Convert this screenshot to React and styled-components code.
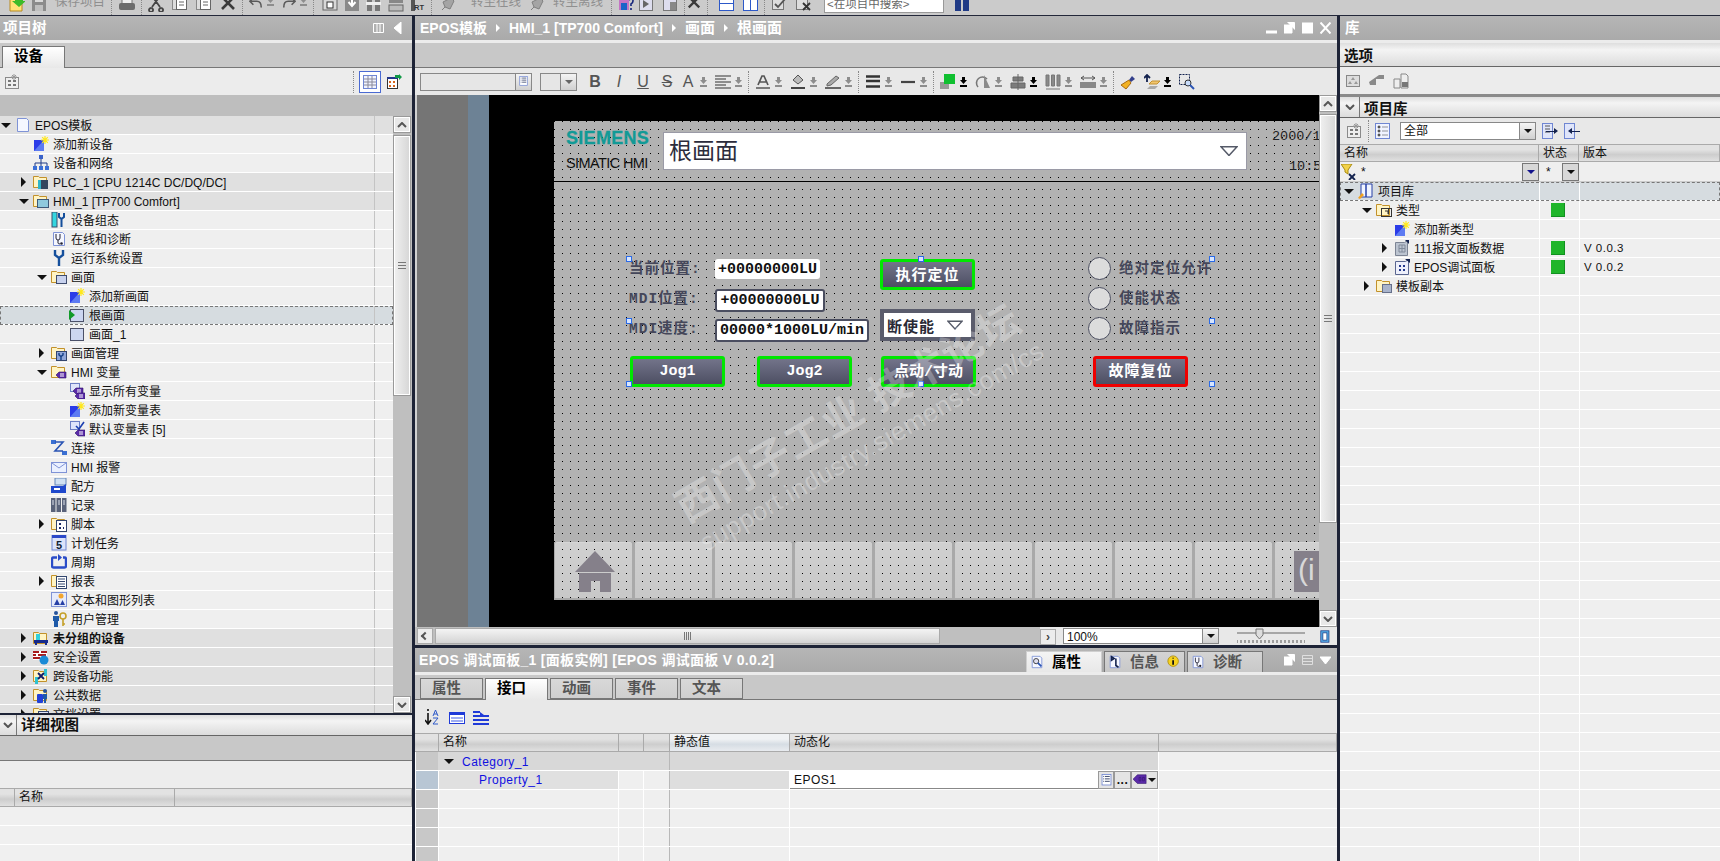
import React from 'react'
import styled, { createGlobalStyle, css } from 'styled-components'

const UI_FONT = `"Liberation Sans", "Noto Sans CJK SC", sans-serif`
const HMI_FONT = `"Liberation Mono", "Noto Sans CJK SC", monospace`

const GlobalStyle = createGlobalStyle`
	html, body { margin: 0; padding: 0; background: #c8c8c8; }
	body { width: 1720px; height: 861px; overflow: hidden; font-family: ${UI_FONT}; font-size: 12px; color: #111; }
	#root { width: 1720px; height: 861px; }
	* { box-sizing: border-box; }
`

/* ---------- icons, all on a 16 x 16 grid ---------- */

const Folder = ({ children }) => (
	<>
		<path d="M.5 2.500h5l1 1h7v10H.5z" fill="#fff4c4" stroke="#c2912b" />
		{children}
	</>
)
const Doc = ({ children }) => (
	<>
		<path d="M2.500 1.500h9l2 2v11h-11z" fill="#f5f7ff" stroke="#7f93d6" />
		{children}
	</>
)
const Tag = ({ x = 6, y = 9 }) => (
	<g transform={`translate(${x} ${y})`}>
		<path d="M0 3l3-3h7v6H3z" fill="#5a2aa8" stroke="#2e1266" strokeWidth=".6" />
		<path d="M4 2h4M4 4h4" stroke="#fff" />
	</g>
)
const Drum = () => (
	<>
		<rect x="1" y="4" width="10" height="11" fill="#2b3ce8" />
		<path d="M1 15L11 4v11z" fill="#5d7bf2" />
	</>
)

const icons = {
	page: <Doc />,
	add: (
		<>
			<Drum />
			<path d="M12 0v8M8 4h8M9.200 1.200l5.600 5.600M14.800 1.200l-5.600 5.600" stroke="#ffe81a" strokeWidth="1.200" />
		</>
	),
	network: (
		<>
			<rect x="6" y="0" width="4" height="4" fill="#3a62c9" />
			<path d="M8 4v4M2 12V8h12v4M8 8v4" stroke="#1f3a86" fill="none" />
			<rect x="0" y="11" width="4" height="4" fill="#3b6fd6" />
			<rect x="6" y="11" width="4" height="4" fill="#3b6fd6" />
			<rect x="12" y="11" width="4" height="4" fill="#3b6fd6" />
		</>
	),
	plc: (
		<Folder>
			<rect x="5" y="6" width="3" height="9" fill="#2fb5c9" />
			<rect x="8" y="6" width="7" height="9" fill="#34465e" />
		</Folder>
	),
	hmi: (
		<Folder>
			<rect x="4.500" y="6.500" width="11" height="8" fill="#8fc9dd" stroke="#3e5878" />
		</Folder>
	),
	config: (
		<>
			<rect x="1" y="0" width="5" height="15" fill="#34d6e0" stroke="#38506e" />
			<path d="M8 1v4l2.500 2L13 5V1M10.500 7v8" stroke="#154f9c" strokeWidth="2" fill="none" />
		</>
	),
	steth: (
		<Doc>
			<path d="M5 3v4q0 2 2 2t2-2V3M7 9v3q0 1 2 1" stroke="#223" fill="none" />
			<circle cx="10.500" cy="12.500" r="1.300" fill="#223" />
		</Doc>
	),
	wrench: <path d="M4 0v5l4 3 4-3V0M8 8v8" stroke="#154f9c" strokeWidth="2.400" fill="none" />,
	screens: (
		<Folder>
			<rect x="5.500" y="6.500" width="10" height="8" fill="#c8d2ee" stroke="#3e4c6e" />
		</Folder>
	),
	screen: <rect x="1.500" y="2.500" width="13" height="12" fill="#ccd6f0" stroke="#4a5068" />,
	screenOn: (
		<>
			<rect x="1.500" y="2.500" width="13" height="12" fill="#ccd6f0" stroke="#4a5068" />
			<path d="M0 3l6 5-6 5z" fill="#119a2a" />
		</>
	),
	manage: (
		<Folder>
			<rect x="5.500" y="6.500" width="10" height="9" fill="#8fa6d8" stroke="#33466e" />
			<path d="M8 8v2l2 1.500 2-1.500V8M10 11v4" stroke="#123f86" strokeWidth="1.400" fill="none" />
		</Folder>
	),
	tagFolder: (
		<Folder>
			<Tag x={5} y={8} />
		</Folder>
	),
	allTags: (
		<>
			<rect x="1.500" y=".5" width="9" height="8" fill="#dfe5fa" stroke="#6d7fc4" />
			<Tag x={4} y={5} />
			<Tag x={6} y={10} />
		</>
	),
	tagTable: (
		<>
			<rect x="1.500" y=".5" width="9" height="8" fill="#dfe5fa" stroke="#6d7fc4" />
			<path d="M7 5l3 3 5-7" stroke="#1c3fb0" strokeWidth="1.600" fill="none" />
			<Tag x={6} y={9} />
		</>
	),
	link: (
		<>
			<rect x="0" y="0" width="5" height="4" fill="#3a6fd2" />
			<rect x="11" y="11" width="5" height="4" fill="#3a6fd2" />
			<path d="M4 2h8L4 11h8" stroke="#2a54b4" strokeWidth="1.600" fill="none" />
		</>
	),
	mail: (
		<>
			<rect x=".5" y="3.500" width="15" height="10" fill="#eaf0ff" stroke="#7f93d6" />
			<path d="M1 4l7 5 7-5" stroke="#7f93d6" fill="none" />
		</>
	),
	recipe: (
		<>
			<rect x="4" y="0" width="11" height="7" fill="#cfe0f2" stroke="#6486b8" />
			<path d="M0 8h12l3-2v9H0z" fill="#1f48cc" />
			<rect x="3" y="10" width="6" height="2" fill="#fff" />
		</>
	),
	log: (
		<>
			<rect x="0" y="1" width="4.500" height="14" fill="#59627a" />
			<rect x="5.500" y="1" width="4.500" height="14" fill="#59627a" />
			<rect x="11" y="1" width="4.500" height="14" fill="#59627a" />
			<path d="M2 3v5M8 3v5M13 3v5" stroke="#dfe3ee" />
		</>
	),
	script: (
		<Folder>
			<rect x="5.500" y="4.500" width="10" height="11" fill="#fff" stroke="#33466e" />
			<path d="M8 7h2v2H8zM12 7h1M8 11h2v2H8zM12 11h1v2h-1z" fill="#1b2a66" />
		</Folder>
	),
	task: (
		<>
			<rect x="1" y="0" width="14" height="15" fill="#dbe3fa" stroke="#6f86d2" />
			<rect x="1" y="0" width="14" height="3" fill="#2b48c8" />
			<text x="8" y="13.500" textAnchor="middle" fontSize="11" fontWeight="700" fontFamily="Liberation Sans" fill="#123">5</text>
		</>
	),
	cycle: (
		<>
			<path d="M6 3.500H2.500a1.500 1.500 0 0 0-1.500 1.500v7a1.500 1.500 0 0 0 1.500 1.500h11a1.500 1.500 0 0 0 1.500-1.500V5a1.500 1.500 0 0 0-1.500-1.500H12" stroke="#2a4cc8" strokeWidth="2.400" fill="none" />
			<path d="M7 0l4 3.500-4 3.500z" fill="#2a4cc8" />
		</>
	),
	report: (
		<Folder>
			<rect x="5.500" y="3.500" width="10" height="12" fill="#fff" stroke="#33466e" />
			<path d="M7 6h7M7 8.500h7M7 11h7M7 13.500h7" stroke="#33466e" />
		</Folder>
	),
	texts: (
		<>
			<rect x=".5" y=".5" width="15" height="14" fill="#e6ebfb" stroke="#7f93d6" />
			<circle cx="10" cy="4" r="2.500" fill="#f2a530" />
			<path d="M3 13l3-6 3 6zM9 13l2.500-5 2.500 5z" fill="#2740a6" />
		</>
	),
	users: (
		<>
			<circle cx="5" cy="2" r="2" fill="#26539c" />
			<path d="M2 5h6v5H7v6H3v-6H2z" fill="#1f5aa8" />
			<circle cx="12" cy="5" r="3" fill="none" stroke="#c5a02a" strokeWidth="1.600" />
			<path d="M12 8v7M12 13h2" stroke="#c5a02a" strokeWidth="1.600" />
		</>
	),
	ungrouped: (
		<Folder>
			<rect x="3" y="4" width="4" height="6" fill="#32d0dc" />
			<rect x="1" y="10" width="14" height="3" fill="#152a8c" />
			<path d="M3 13v2M13 13v2" stroke="#152a8c" strokeWidth="2" />
		</Folder>
	),
	security: (
		<>
			<rect x="0" y="2" width="14" height="9" fill="#fff" />
			<path d="M0 3h6M8 3h6M0 6h3M5 6h8M0 9h7" stroke="#a81c1c" strokeWidth="1.800" />
			<circle cx="11" cy="11" r="4.500" fill="#1a8ad6" />
		</>
	),
	cross: (
		<Folder>
			<rect x="2" y="9" width="3" height="7" fill="#2fc2d0" />
			<rect x="11" y="1" width="3" height="7" fill="#2fc2d0" />
			<path d="M5 5l6 6M11 5l-6 6" stroke="#101a66" strokeWidth="1.800" />
		</Folder>
	),
	shared: (
		<Folder>
			<rect x="4" y="7" width="6" height="9" rx="1" fill="#2240d8" />
			<circle cx="12" cy="4" r="2" fill="#26539c" />
			<path d="M10 7h4v5h-1v4h-2v-4h-1z" fill="#1f5aa8" />
		</Folder>
	),
	docs: (
		<Folder>
			<rect x="5.500" y="5.500" width="10" height="9" fill="#dfe5fa" stroke="#33466e" />
		</Folder>
	),
	book: (
		<>
			<path d="M3 1h5v13H3zM8 1h6v13H8z" fill="#f0f4ff" stroke="#2740a6" />
			<path d="M0 15l4-5 2 2-4 4z" fill="#f0a020" />
		</>
	),
	types: (
		<Folder>
			<path d="M6.500 6.500h6v6M9 9h3v3" stroke="#333" fill="none" />
			<rect x="5.500" y="6.500" width="10" height="8" fill="none" stroke="#333" />
		</Folder>
	),
	block: (
		<>
			<path d="M1.500 2.500h9l3-2v15h-12z" fill="#bcc4d0" stroke="#7c8494" />
			<path d="M5 5h6v7H5zM8 5v7M5 8.500h6" stroke="#808a9a" fill="none" />
			<path d="M11 0h4v4z" fill="#13224e" />
		</>
	),
	faceplate: (
		<>
			<path d="M1.500 2.500h10l3-2v15h-13z" fill="#eef0fb" stroke="#5a6690" />
			<path d="M5 6h2v2H5zM9 6h2v2H9zM5 10h2v2H5zM9 10h2v2H9z" fill="#24388c" />
			<path d="M11 0h5v4z" fill="#13224e" />
		</>
	),
	copies: (
		<Folder>
			<rect x="6.500" y="6.500" width="9" height="8" fill="#a9b4cc" stroke="#66708a" />
		</Folder>
	),
	/* toolbars */
	newProject: (
		<>
			<path d="M1 3h12v12H1z" fill="#ffe278" stroke="#b88a20" />
			<path d="M6 0h8v5h3l-7 6-7-6h3z" fill="#3dbb2a" />
		</>
	),
	save: (
		<>
			<rect x="1" y="1" width="14" height="14" fill="#767676" />
			<rect x="4" y="1" width="8" height="5" fill="#ddd" />
			<rect x="4" y="9" width="8" height="6" fill="#bbb" />
		</>
	),
	print: (
		<>
			<rect x="3" y="0" width="10" height="8" fill="#eee" stroke="#777" />
			<rect x="0" y="7" width="16" height="7" rx="2" fill="#6c6c6c" />
		</>
	),
	cut: <path d="M4 0l8 11M12 0L4 11M3 12a2 2 0 1 0 .1 0M13 12a2 2 0 1 0 .1 0" stroke="#444" strokeWidth="1.800" fill="none" />,
	sheet: (
		<>
			<rect x="1.500" y="2.500" width="9" height="11" fill="#ddd" stroke="#888" />
			<rect x="5.500" y=".5" width="10" height="13" fill="#fff" stroke="#666" />
			<path d="M8 3h5M8 6h5M8 9h5" stroke="#666" />
		</>
	),
	del: <path d="M2 1l12 12M14 1L2 13" stroke="#3a3a3a" strokeWidth="2.600" />,
	undo: <path d="M5 2L1 6l4 4M1 6h8q5 0 5 7" stroke="#5a5a5a" strokeWidth="1.800" fill="none" />,
	redo: <path d="M11 2l4 4-4 4M15 6H7q-5 0-5 7" stroke="#5a5a5a" strokeWidth="1.800" fill="none" />,
	machine: (
		<>
			<rect x="1" y="2" width="14" height="12" fill="#d8d8d8" stroke="#666" />
			<rect x="5" y="6" width="6" height="6" fill="#fff" stroke="#333" />
		</>
	),
	download: (
		<>
			<rect x="1" y="1" width="14" height="14" fill="#8a8a8a" />
			<path d="M8 2v7M4.500 6L8 10l3.500-4" stroke="#fff" strokeWidth="2" fill="none" />
		</>
	),
	upload: (
		<>
			<rect x="1" y="1" width="5" height="14" fill="#777" />
			<rect x="9" y="1" width="5" height="14" fill="#777" />
			<rect x="0" y="6" width="15" height="3" fill="#eee" />
		</>
	),
	device: (
		<>
			<rect x="1" y="1" width="14" height="6" fill="#888" />
			<rect x="1" y="9" width="14" height="6" fill="#bbb" stroke="#666" />
		</>
	),
	rt: (
		<>
			<rect x="1" y="0" width="4" height="15" fill="#555" />
			<text x="4" y="14" fontSize="7.500" fontWeight="700" fontFamily="Liberation Sans" fill="#333">RT</text>
		</>
	),
	plug: <path d="M2 14l3-3 5 2 4-8-3-3-8 4 2 5z" fill="#a4a4a4" stroke="#808080" />,
	access: (
		<>
			<rect x="1" y="4" width="10" height="10" fill="#c030c0" opacity=".55" />
			<rect x="3" y="7" width="6" height="7" fill="#1a64c8" />
			<path d="M11 4q4-3 4 1 0 2-2 3v2M13 12v2" stroke="#14247a" strokeWidth="1.600" fill="none" />
		</>
	),
	win: (
		<>
			<rect x="1.500" y="1.500" width="13" height="13" fill="#dde" stroke="#777" />
			<path d="M5 4v8l6-4z" fill="#666" />
		</>
	),
	winSplit: (
		<>
			<rect x="1.500" y="1.500" width="13" height="13" fill="#dde" stroke="#777" />
			<rect x="8" y="6" width="6" height="8" fill="#888" />
		</>
	),
	winRows: (
		<>
			<rect x="1.500" y="1.500" width="14" height="13" fill="#fff" stroke="#2c58c8" />
			<path d="M2 7.500h13" stroke="#2c58c8" />
		</>
	),
	winCols: (
		<>
			<rect x="1.500" y="1.500" width="14" height="13" fill="#fff" stroke="#2c58c8" />
			<path d="M8.500 2v12" stroke="#2c58c8" />
		</>
	),
	check: (
		<>
			<rect x="1.500" y="2.500" width="11" height="11" fill="#ddd" stroke="#777" />
			<path d="M4 8l3 3 7-8" stroke="#555" strokeWidth="1.800" fill="none" />
		</>
	),
	checkX: (
		<>
			<rect x="1.500" y="2.500" width="11" height="11" fill="#ddd" stroke="#777" />
			<path d="M8 7l7 7M15 7l-7 7" stroke="#333" strokeWidth="1.800" />
		</>
	),
	binoculars: (
		<>
			<path d="M2 4h3v-3h3v14H2zM10 1h3v3h3v11h-6z" fill="#1f3a86" />
			<path d="M0 1h6M0 3h6" stroke="#a8c0f0" />
		</>
	),
	filterGrid: (
		<>
			<rect x="1.500" y="3.500" width="13" height="11" fill="#eee" stroke="#8a8a8a" />
			<path d="M4 6h3v2H4zM9 6h3v2H9zM4 10h3v2H4zM9 10h3v2H9z" fill="#777" />
			<path d="M10 0v6M7 3h6M8 1l4 4M12 1L8 5" stroke="#999" />
		</>
	),
	gridView: (
		<>
			<rect x="1.500" y="1.500" width="13" height="13" fill="#f0f3ff" stroke="#6f86d2" />
			<path d="M2 5h12M2 8h12M2 11h12M6 2v12M10 2v12" stroke="#8a8a9a" />
		</>
	),
	gridGo: (
		<>
			<rect x="1.500" y="3.500" width="10" height="11" fill="#fff" stroke="#333" />
			<path d="M3 7h2v2H3zM7 7h2v2H7zM3 11h2v2H3zM7 11h2v2H7z" fill="#d8661c" />
			<rect x="1" y="3" width="11" height="2" fill="#24388c" />
			<path d="M9 1h4V0l3 3-3 3V4H9z" fill="#129a48" />
		</>
	),
	sortAZ: (
		<>
			<path d="M3 0v2M3 4v10M0 11l3 4 3-4" stroke="#111" strokeWidth="1.600" fill="none" />
			<path d="M8 7l2.500-6L13 7M9 5h3M8 9h5l-5 6h5" stroke="#2c58c8" fill="none" />
		</>
	),
	groupBox: (
		<>
			<rect x=".5" y="3.500" width="15" height="11" fill="#fff" stroke="#1f3ad8" />
			<rect x="0" y="3" width="16" height="3" fill="#1f3ad8" />
			<path d="M2 9h12M2 12h12" stroke="#7f93f0" strokeWidth="1.500" />
		</>
	),
	levels: <path d="M0 2h7v2H0zM0 6h16v2H0zM0 10h16v2H0zM0 14h16v2H0zM7 3l4 3H7z" fill="#1f3ad8" />,
	align: <path d="M0 2h16M0 5h11M0 8h16M0 11h11M0 14h16" stroke="#6f6f6f" strokeWidth="1.600" />,
	fontColor: <path d="M3 11l4-9h2l4 9M5 8h6M1 14h14" stroke="#555" strokeWidth="1.700" fill="none" />,
	fill: (
		<>
			<path d="M3 6l5-5 5 5-5 4z" fill="#bbb" stroke="#555" />
			<path d="M1 14h14" stroke="#444" strokeWidth="2" />
		</>
	),
	pen: (
		<>
			<path d="M2 10L11 2l3 2-8 7-4 1z" fill="#aaa" stroke="#666" />
			<path d="M0 14h16" stroke="#666" strokeWidth="2" />
		</>
	),
	lineWeights: <path d="M1 2.500h14M1 7h14M1 12.500h14" stroke="#333" strokeWidth="2.400" />,
	lineStyle: <path d="M1 8h14" stroke="#444" strokeWidth="2.200" />,
	green: (
		<>
			<rect x="0" y="8" width="9" height="7" fill="#999" />
			<rect x="4" y="0" width="11" height="10" fill="#10c030" />
		</>
	),
	rotate: (
		<>
			<path d="M3 13A6 6 0 0 1 12 5" stroke="#777" strokeWidth="1.600" fill="none" />
			<path d="M9 1l6 13H9z" fill="#8a8a8a" />
		</>
	),
	alignMid: <path d="M8 0v16M3 3h10v4H3zM1 9h14v5H1z" fill="#7c7c7c" stroke="#666" />,
	distribute: <path d="M1 1h3v11H1zM6.500 1h3v11h-3zM12 1h3v11h-3zM1 15h14" fill="#8a8a8a" stroke="#777" />,
	sameSize: (
		<>
			<rect x="0" y="8" width="16" height="6" fill="#888" />
			<path d="M1 4h14M1 4l3-2M1 4l3 2M15 4l-3-2M15 4l-3 2" stroke="#555" />
		</>
	),
	brush: (
		<>
			<path d="M9 6l3-4 3 3-4 3z" fill="#34408c" />
			<path d="M1 11l8-5 2 3-5 6z" fill="#f2b224" stroke="#a86a10" />
		</>
	),
	layers: (
		<>
			<path d="M3 8V1M0 4l3-3 3 3" stroke="#13224e" strokeWidth="1.800" fill="none" />
			<path d="M5 10l3-3h8l-3 3z" fill="#f2c66e" stroke="#c29030" />
			<path d="M3 15l3-3h8l-3 3z" fill="#aaa" />
		</>
	),
	zoomBox: (
		<>
			<rect x=".5" y=".5" width="10" height="10" fill="none" stroke="#13224e" strokeDasharray="2 1" />
			<circle cx="9" cy="9" r="3" fill="#c8dcfa" stroke="#333" />
			<path d="M11 11l4 4" stroke="#2a54b4" strokeWidth="2" />
		</>
	),
	inspect: (
		<Doc>
			<circle cx="7" cy="7" r="3" fill="#dde" stroke="#333" />
			<path d="M9 9l4 4" stroke="#2a54b4" strokeWidth="2" />
		</Doc>
	),
	info: (
		<Doc>
			<path d="M4 2l3 2-3 2zM9 4v8l3 2" stroke="#13224e" strokeWidth="1.800" fill="none" />
		</Doc>
	),
	warn: (
		<>
			<circle cx="7" cy="7" r="6" fill="#f6d21e" stroke="#b09010" />
			<path d="M7 3v1M7 6v5" stroke="#111" strokeWidth="2" />
		</>
	),
	library: (
		<>
			<rect x="1.500" y="2.500" width="13" height="11" fill="#ddd" stroke="#888" />
			<path d="M8 4l2 3H6zM5 8l2 3H3zM11 8l2 3H9z" fill="#999" />
		</>
	),
	lib2: <path d="M0 9l10-7h5v4H7v6H1z" fill="#8a8a8a" />,
	lib3: (
		<>
			<path d="M1 6h6v9H1zM8 1h5l2 2v12H8z" fill="#eee" stroke="#888" />
			<rect x="9" y="9" width="6" height="5" fill="#777" />
		</>
	),
	listView: (
		<>
			<rect x=".5" y=".5" width="14" height="15" fill="#f0f3ff" stroke="#6f86d2" />
			<path d="M3 3h2v2H3zM7 4h6M3 7h2v2H3zM7 8h6M3 11h2v2H3zM7 12h6" fill="#555" stroke="#555" strokeWidth=".6" />
		</>
	),
	moveIn: (
		<>
			<rect x=".5" y=".5" width="10" height="15" fill="#dfe5fa" stroke="#6f86d2" />
			<path d="M3 3h5M3 6h5M3 9h5" stroke="#555" />
			<path d="M4 8h8V5l4 3-4 3v-2H4z" fill="#13224e" />
		</>
	),
	moveOut: (
		<>
			<rect x=".5" y=".5" width="10" height="15" fill="#dfe5fa" stroke="#6f86d2" />
			<path d="M16 8H8V5L4 8l4 3V9h8z" fill="#13224e" />
		</>
	),
	funnel: (
		<>
			<path d="M0 0h11L7 6v4L4 8V6z" fill="#f2d24a" stroke="#a88a10" />
			<path d="M8 10l6 6M14 10l-6 6" stroke="#13224e" strokeWidth="1.800" />
		</>
	),
	listBtn: (
		<>
			<rect x="2.500" y=".5" width="11" height="13" fill="#fff" stroke="#6f86d2" />
			<path d="M4 3h1M6 3h6M4 6h1M6 6h6M4 9h1M6 9h6" stroke="#13224e" />
		</>
	),
	tagBtn: <path d="M0 7l5-5h10v10H5zM7 5h2v4H7zM11 5h2v4h-2z" fill="#5a2aa8" stroke="#2e1266" strokeWidth=".6" />,
	fit: (
		<>
			<rect x="1" y="1" width="10" height="14" fill="#58b6f0" stroke="#1f3a86" />
			<rect x="3.500" y="3.500" width="5" height="9" fill="#fff" stroke="#1f3a86" />
		</>
	),
}

const Svg = styled.svg`
	display: block;
	flex: none;
	width: ${p => p.$size}px;
	height: ${p => p.$size}px;
	opacity: ${p => (p.$dim ? 0.75 : 1)};
`
const Icon = ({ name, size = 16, dim }) => (
	<Svg viewBox="0 0 16 16" $size={size} $dim={dim}>
		{icons[name]}
	</Svg>
)

/* ---------- page frame ---------- */

const Page = styled.div`
	width: 1720px;
	height: 861px;
	display: flex;
	flex-direction: column;
	overflow: hidden;
`
const TopBar = styled.div`
	height: 16px;
	flex: none;
	display: flex;
	align-items: flex-start;
	background: #cbcbcb;
	border-bottom: 1px solid #23283a;
	overflow: hidden;
	padding-left: 9px;
`
const TopTool = styled.div`
	flex: none;
	margin-top: -4px;
	margin-left: ${p => p.$ml || 0}px;
`
const TopText = styled.span`
	flex: none;
	margin-top: -7px;
	margin-left: ${p => p.$ml || 8}px;
	font-size: 12.500px;
	line-height: 18px;
	color: #8f8f8f;
`
const TopSep = styled.div`
	flex: none;
	height: 15px;
	margin-left: ${p => p.$ml || 6}px;
	margin-right: ${p => p.$mr || 6}px;
	border-left: 1px dotted #888;
`
const SearchBox = styled.div`
	flex: none;
	width: 120px;
	height: 13px;
	margin-left: 13px;
	padding-left: 2px;
	background: #fff;
	border: 1px solid #999;
	border-top: 0;
	font-size: 11.500px;
	line-height: 8px;
	color: #666;
	overflow: hidden;
	white-space: nowrap;
`
const Columns = styled.div`
	flex: 1;
	min-height: 0;
	display: flex;
`
const Pane = styled.section`
	flex: none;
	width: ${p => p.$w}px;
	height: 100%;
	display: flex;
	flex-direction: column;
	overflow: hidden;
	background: #e8e8e8;
`
const Divider = styled.div`
	flex: none;
	width: 3px;
	background: #1d2336;
`
const TitleBar = styled.div`
	flex: none;
	height: ${p => p.$h || 24}px;
	display: flex;
	align-items: center;
	gap: ${p => p.$gap || 0}px;
	padding-left: ${p => p.$pl || 3}px;
	background: linear-gradient(#b6b6b6, #aaaaaa);
	color: #fff;
	font-weight: 700;
	font-size: 14.500px;
	line-height: 20px;
	white-space: nowrap;
`
const WhiteEdge = styled.div`
	flex: none;
	height: 3px;
	background: #ececec;
`
const Crumb = styled.span`
	font-size: ${p => p.$fs || 14}px;
	letter-spacing: ${p => p.$ls || 0}px;
`
const CrumbArrow = styled.span`
	flex: none;
	width: 0;
	height: 0;
	border-left: 4px solid #fff;
	border-top: 4px solid transparent;
	border-bottom: 4px solid transparent;
`
const TitleTools = styled.div`
	margin-left: ${p => (p.$ml ? `${p.$ml}px` : 'auto')};
	display: flex;
	align-items: center;
	gap: ${p => p.$gap || 7}px;
	padding-right: ${p => p.$pr || 6}px;
`
const WinGlyph = styled.svg`
	display: block;
	width: 11px;
	height: 12px;
	fill: #fff;
	stroke: #fff;
	opacity: ${p => (p.$dim ? 0.6 : 1)};
`
const GreyStrip = styled.div`
	flex: none;
	height: ${p => p.$h || 25}px;
	background: ${p => p.$bg || '#c8c8c8'};
	border-bottom: ${p => (p.$flat ? 0 : '1px solid #777')};
`
const ToolStrip = styled.div`
	flex: none;
	height: ${p => p.$h}px;
	display: flex;
	align-items: center;
	gap: ${p => p.$gap || 8}px;
	padding-left: ${p => p.$pl || 4}px;
	background: ${p => p.$bg || '#eaeaea'};
`

/* ---------- trees and tables ---------- */

const TreeWrap = styled.div`
	flex: none;
	height: 597px;
	display: flex;
	background: #bfbfbf;
`
const TreeList = styled.div`
	flex: 1;
	min-width: 0;
	overflow: hidden;
`
const Row = styled.div`
	height: 19px;
	display: flex;
	align-items: stretch;
	border-bottom: 1px solid #fff;
	background: ${p => (p.$tone === 'group' ? '#e0e0e0' : p.$tone === 'sel' ? '#d6dce0' : '#efefef')};
	${p => p.$tone === 'sel' && css`
		outline: 1px dashed #777;
		outline-offset: -1px;
	`}
`
const NameCell = styled.div`
	flex: 1;
	min-width: 0;
	display: flex;
	align-items: center;
	padding-left: ${p => p.$level * 18}px;
	font-weight: ${p => (p.$bold ? 700 : 400)};
	font-size: 12px;
	line-height: 18px;
	white-space: nowrap;
	overflow: hidden;
`
const CaretBox = styled.span`
	flex: none;
	width: 15px;
	height: 18px;
	padding-right: 4px;
	display: flex;
	align-items: center;
	justify-content: center;
`
const Caret = styled.span`
	display: block;
	width: 0;
	height: 0;
	${p => (p.$open
		? css`
			border-top: 5px solid #111;
			border-left: 5px solid transparent;
			border-right: 5px solid transparent;
		`
		: css`
			border-left: 5px solid #111;
			border-top: 5px solid transparent;
			border-bottom: 5px solid transparent;
		`)}
`
const Label = styled.span`
	margin-left: 4px;
	padding-top: 1px;
`
const SideCell = styled.div`
	flex: none;
	width: ${p => p.$w}px;
	display: flex;
	align-items: center;
	justify-content: ${p => (p.$center ? 'center' : 'flex-start')};
	padding-left: ${p => (p.$center ? 0 : 4)}px;
	padding-right: ${p => (p.$center ? 3 : 0)}px;
	border-left: 1px solid ${p => p.$line || '#fff'};
	font-size: 11.500px;
	letter-spacing: .5px;
`
const Status = styled.span`
	display: block;
	width: 14px;
	height: 14px;
	background: #1fb52a;
	border-bottom: 1px solid #119020;
	border-right: 1px solid #119020;
`
const ScrollY = styled.div`
	flex: none;
	width: 18px;
	display: flex;
	flex-direction: column;
	background: #bfbfbf;
	margin-right: ${p => p.$mr || 0}px;
`
const ScrollBtn = styled.div`
	flex: none;
	height: ${p => p.$h || 17}px;
	display: flex;
	align-items: center;
	justify-content: center;
	background: #e8e8e8;
	border: 1px solid #999;
	box-shadow: inset 0 0 0 1px #fff;
`
const Chevron = styled.svg`
	width: 10px;
	height: 6px;
	fill: none;
	stroke: #555;
	stroke-width: 2;
`
const Thumb = styled.div`
	flex: none;
	height: ${p => p.$h}px;
	margin-top: 2px;
	display: flex;
	align-items: center;
	justify-content: center;
	background: linear-gradient(90deg, #f0f0f0, #d6d6d6);
	border: 1px solid #999;
	box-shadow: inset 0 0 0 1px #fff;
`
const Grip = styled.span`
	display: block;
	width: 8px;
	height: 7px;
	border-top: 1px solid #777;
	border-bottom: 1px solid #777;
	background: linear-gradient(transparent 2px, #777 2px, #777 3px, transparent 3px);
`
const Track = styled.div`
	flex: 1;
`
const HeadRow = styled.div`
	flex: none;
	height: ${p => p.$h || 19}px;
	display: flex;
	background: linear-gradient(#e2e2e2, #e2e2e2 30%, #cdcdcd 60%, #e0e0e0);
	border-top: 1px solid #aaa;
	border-bottom: 1px solid #aaa;
`
const HeadCell = styled.div`
	flex: ${p => (p.$w ? 'none' : 1)};
	width: ${p => p.$w || 0}px;
	padding-left: 4px;
	border-right: 1px solid #aaa;
	font-size: 12px;
	line-height: 17px;
	${p => p.$light && css`background: linear-gradient(#f0f2f4, #f0f2f4 30%, #d6dde4 60%, #e8ebef);`}
`
const SectionHead = styled.div`
	flex: none;
	height: ${p => p.$h || 21}px;
	display: flex;
	align-items: stretch;
	background: linear-gradient(#dedede, #f4f4f4 30%, #dcdcdc);
	border-bottom: 1px solid #666;
	font-weight: 700;
	font-size: 14.500px;
	line-height: 20px;
`
const SectionToggle = styled.div`
	flex: none;
	width: ${p => p.$w || 17}px;
	display: flex;
	align-items: center;
	justify-content: center;
	border-right: 1px solid #777;
`
const SectionName = styled.div`
	padding: ${p => p.$pt || 0}px 0 0 4px;
`

/* ---------- editor area ---------- */

const ComboWrap = styled.div`
	flex: none;
	width: ${p => p.$w}px;
	height: ${p => p.$h || 18}px;
	display: flex;
	background: ${p => p.$bg || '#e6e6e6'};
	border: 1px solid #888;
	font-size: 12px;
	line-height: 16px;
	padding-left: 3px;
	margin-left: ${p => p.$ml || 0}px;
`
const ComboValue = styled.div`
	flex: 1;
	min-width: 0;
`
const ComboBtn = styled.div`
	flex: none;
	width: 16px;
	display: flex;
	align-items: center;
	justify-content: center;
	background: linear-gradient(#f4f4f4, #d0d0d0);
	border-left: 1px solid #888;
`
const DownTri = styled.span`
	display: block;
	width: 0;
	height: 0;
	border-top: 4px solid ${p => p.$c || '#666'};
	border-left: 4px solid transparent;
	border-right: 4px solid transparent;
`
const ToolPair = styled.div`
	flex: none;
	display: flex;
	align-items: center;
	gap: 4px;
	margin-left: ${p => p.$ml || 0}px;
`
const DropMark = styled.svg`
	display: block;
	flex: none;
	width: 7px;
	height: 10px;
	fill: ${p => (p.$on ? '#000' : '#8d8d8d')};
`
const TextTool = styled.span`
	flex: none;
	width: 16px;
	margin-left: ${p => p.$ml || 0}px;
	text-align: center;
	font-family: "Liberation Sans", sans-serif;
	font-size: 16px;
	line-height: 18px;
	color: #555;
	font-weight: ${p => (p.$b ? 700 : 400)};
	font-style: ${p => (p.$i ? 'italic' : 'normal')};
	text-decoration: ${p => p.$deco || 'none'};
`
const DotSep = styled.div`
	flex: none;
	height: 22px;
	margin: 0 ${p => p.$m || 0}px;
	border-left: 1px dotted #888;
`
const CanvasRow = styled.div`
	flex: none;
	height: 532px;
	display: flex;
	background: #d0d0d0;
`
const GreySide = styled.div`
	flex: none;
	width: 51px;
	margin-left: 2px;
	background: #757575;
`
const BlueSide = styled.div`
	flex: none;
	width: 21px;
	background: #6d8295;
`
const BlackStage = styled.div`
	flex: 1;
	min-width: 0;
	padding: 26px 0 0 65px;
	background: #000;
	overflow: hidden;
`
const dots = (bg, x = 0, y = 0) => css`
	background-color: ${bg};
	background-image: radial-gradient(circle at .5px .5px, #000 .7px, transparent .7px);
	background-size: 8px 8px;
	background-position: ${x}px ${y}px;
`
const Screen = styled.div`
	position: relative;
	width: 765px;
	height: 479px;
	display: flex;
	flex-direction: column;
	overflow: hidden;
`
const ScreenHead = styled.div`
	flex: none;
	height: 61px;
	display: flex;
	padding-left: 12px;
	border-bottom: 1px solid #000;
	${dots('#b2b2b2')}
`
const Brand = styled.div`
	flex: none;
	width: 85px;
	padding-top: 7px;
`
const BrandName = styled.div`
	font-family: "Liberation Sans", sans-serif;
	font-size: 18px;
	font-weight: 700;
	line-height: 20px;
	letter-spacing: .3px;
	color: #129a96;
	-webkit-text-stroke: .3px #129a96;
`
const BrandSub = styled.div`
	margin-top: 7px;
	font-family: "Liberation Sans", sans-serif;
	font-size: 14.500px;
	line-height: 17px;
	letter-spacing: -.6px;
	white-space: nowrap;
	color: #111;
`
const ScreenTitle = styled.div`
	flex: none;
	width: 584px;
	height: 38px;
	margin: 11px 0 0 12px;
	display: flex;
	align-items: center;
	justify-content: space-between;
	padding: 0 8px 0 5px;
	background: #fff;
	border: 1px solid #9a9aa6;
	font-size: 23px;
	line-height: 30px;
	color: #2c2c3c;
`
const Clock = styled.div`
	flex: none;
	margin-left: 25px;
	display: flex;
	flex-direction: column;
	font-family: ${HMI_FONT};
	font-size: 13.500px;
	color: #222;
	white-space: nowrap;
`
const ClockDate = styled.div`
	margin-top: 7px;
	line-height: 18px;
`
const ClockTime = styled.div`
	margin: 12px 0 0 17px;
	line-height: 18px;
`
const TriOutline = styled.svg`
	display: block;
	width: ${p => p.$w}px;
	height: ${p => p.$h}px;
	fill: none;
	stroke: #555a68;
	stroke-width: 1.500;
`
const ScreenBody = styled.div`
	position: relative;
	flex: none;
	height: 360px;
	${dots('#b2b2b2', 0, 7)}
`
const place = css`
	position: absolute;
	left: ${p => p.$x}px;
	top: ${p => p.$y}px;
`
const FieldLabel = styled.div`
	${place}
	font-family: ${HMI_FONT};
	font-size: 14.500px;
	font-weight: 700;
	line-height: 18px;
	letter-spacing: 1px;
	color: #45475a;
	white-space: nowrap;
`
const ValueBox = styled.div`
	${place}
	width: ${p => p.$w}px;
	height: ${p => p.$h}px;
	display: flex;
	align-items: center;
	justify-content: center;
	background: #fff;
	border: ${p => (p.$plain ? '0' : '2px solid #4b4e60')};
	border-radius: 3px;
	font-family: ${HMI_FONT};
	font-size: 15px;
	font-weight: 700;
	color: #111;
	white-space: nowrap;
`
const HmiButton = styled.div`
	${place}
	width: 95px;
	height: 31px;
	display: flex;
	align-items: center;
	justify-content: center;
	padding-bottom: ${p => p.$lift || 0}px;
	background: linear-gradient(#73748a, #4d4f63);
	border: 3px solid ${p => p.$edge};
	border-radius: 3px;
	font-family: ${HMI_FONT};
	font-size: 15px;
	font-weight: 700;
	letter-spacing: ${p => p.$ls || 0}px;
	color: #fff;
	white-space: nowrap;
`
const HmiSelect = styled.div`
	${place}
	width: 95px;
	height: 32px;
	display: flex;
	align-items: center;
	justify-content: space-between;
	padding: 0 8px 0 3px;
	background: #fff;
	border: 4px solid #5a5c6c;
	font-size: 15px;
	font-weight: 700;
	letter-spacing: 1px;
	color: #2a2a36;
`
const Lamp = styled.div`
	${place}
	width: 23px;
	height: 23px;
	border-radius: 50%;
	background: #dcdcdc;
	border: 1px solid #4b4e60;
`
const LampLabel = styled.div`
	${place}
	font-size: 14.500px;
	font-weight: 700;
	line-height: 18px;
	letter-spacing: 1px;
	color: #45475a;
	white-space: nowrap;
`
const Handle = styled.span`
	${place}
	width: 6px;
	height: 6px;
	margin: -3px 0 0 -3px;
	background: #d8e6ff;
	border: 1px solid #2b6be8;
`
const FooterBar = styled.div`
	flex: none;
	height: 58px;
	display: flex;
	gap: 3px;
	padding-left: 1px;
	background: #a9a9a9;
`
const FooterCell = styled.div`
	flex: none;
	display: flex;
	align-items: flex-start;
	width: 77px;
	height: 56px;
	padding: 9px 0 0 ${p => p.$pl || 0}px;
	border-radius: 2px 2px 0 0;
	box-shadow: inset 0 1px 0 #d6d6d6;
	background-color: #c8c8c8;
	background-image:
		radial-gradient(circle at .5px .5px, #000 .7px, transparent .7px),
		linear-gradient(#d0d0d0, #c8c8c8);
	background-size: 8px 8px, 100% 100%;
	background-position: 7px 7px, 0 0;
`
const HomeIcon = styled.svg`
	display: block;
	width: 40px;
	height: 41px;
	fill: #85808a;
`
const InfoTile = styled.div`
	width: 40px;
	height: 41px;
	padding-left: 4px;
	background: #85808a;
	font-family: "Liberation Sans", sans-serif;
	font-size: 30px;
	line-height: 38px;
	color: #d8d8d8;
	white-space: nowrap;
	overflow: hidden;
`
const Watermark = styled.div`
	position: absolute;
	left: ${p => p.$x}px;
	top: ${p => p.$y}px;
	transform: rotate(-30deg);
	transform-origin: 0 100%;
	font-family: ${p => (p.$latin ? '"Liberation Sans", sans-serif' : UI_FONT)};
	font-size: ${p => p.$size}px;
	font-weight: ${p => (p.$latin ? 400 : 700)};
	line-height: 1.200;
	letter-spacing: ${p => p.$ls || 0}px;
	color: rgba(255, 255, 255, .28);
	white-space: nowrap;
	pointer-events: none;
`
const StatusRow = styled.div`
	flex: none;
	height: 18px;
	display: flex;
	align-items: center;
	background: #e8e8e8;
`
const HTrack = styled.div`
	flex: none;
	width: 625px;
	height: 18px;
	display: flex;
	padding-left: 2px;
	background: #bfbfbf;
`
const HBtn = styled.div`
	flex: none;
	width: 16px;
	margin-top: 1px;
	height: 16px;
	display: flex;
	align-items: center;
	justify-content: center;
	background: #ececec;
	border: 1px solid #aaa;
	font-weight: 700;
	font-size: 12px;
	color: #444;
`
const HThumb = styled.div`
	flex: none;
	width: 505px;
	height: 16px;
	margin: 1px 0 0 2px;
	display: flex;
	align-items: center;
	justify-content: center;
	background: linear-gradient(#f4f4f4, #d4d4d4);
	border: 1px solid #aaa;
`
const HGrip = styled.span`
	display: block;
	width: 7px;
	height: 8px;
	background: repeating-linear-gradient(90deg, #777 0 1px, transparent 1px 2px);
`
const Slider = styled.svg`
	display: block;
	flex: none;
	width: 68px;
	height: 16px;
	margin-left: 18px;
`
const CaretLeft = styled.span`
	display: block;
	width: 6px;
	height: 6px;
	border-left: 2px solid #555;
	border-bottom: 2px solid #555;
	transform: rotate(45deg);
`

/* ---------- lower property panel ---------- */

const Tabs = styled.div`
	flex: none;
	height: 25px;
	display: flex;
	align-items: flex-end;
	gap: 2px;
	padding-left: ${p => p.$pl || 5}px;
	background: #c8c8c8;
	border-bottom: 1px solid #777;
`
const Tab = styled.div`
	flex: none;
	width: ${p => p.$w || 63}px;
	height: ${p => (p.$on ? 22 : 21)}px;
	margin-bottom: ${p => (p.$on ? -1 : 0)}px;
	padding-right: 10px;
	text-align: center;
	border: 1px solid #777;
	border-bottom: ${p => (p.$on ? 0 : '1px solid #777')};
	background: ${p => (p.$on ? 'linear-gradient(#fff, #e8e8e8)' : 'linear-gradient(#d8d8d8, #cfcfcf)')};
	color: ${p => (p.$on ? '#000' : '#555')};
	font-weight: 700;
	font-size: 14.500px;
	line-height: 19px;
`
const StateTabs = styled.div`
	display: flex;
	align-items: flex-end;
	align-self: flex-end;
	gap: 2px;
	margin-left: auto;
	height: 21px;
`
const StateTab = styled.div`
	flex: none;
	width: ${p => p.$w}px;
	height: 21px;
	display: flex;
	align-items: center;
	gap: 8px;
	padding-left: 3px;
	background: ${p => (p.$on ? 'linear-gradient(#f4f4f4, #e8e8e8)' : 'linear-gradient(#d4d4d4, #c8c8c8)')};
	border: 1px solid ${p => (p.$on ? '#cfcfcf' : '#777')};
	border-bottom: 0;
	color: ${p => (p.$on ? '#000' : '#555')};
	font-size: 14.500px;
	font-weight: 700;
`
const GridRow = styled.div`
	flex: none;
	height: 19px;
	display: grid;
	grid-template-columns: 23px 180px 25px 26px 120px 369px 177px;
	border-bottom: 1px solid #fff;
	background: #efefef;
`
const Cell = styled.div`
	display: flex;
	align-items: center;
	min-width: 0;
	padding-left: ${p => p.$pl || 0}px;
	background: ${p => p.$bg || 'transparent'};
	border-left: 1px solid ${p => p.$line || '#fff'};
	grid-column: ${p => (p.$span ? `span ${p.$span}` : 'auto')};
	color: ${p => p.$c || 'inherit'};
	font-size: 12px;
	letter-spacing: .5px;
	white-space: nowrap;
`
const InputCell = styled.div`
	flex: 1;
	height: 100%;
	display: flex;
	align-items: center;
	padding-left: 4px;
	background: #fff;
	border-bottom: 1px solid #888;
`
const MiniBtn = styled.div`
	flex: none;
	width: ${p => p.$w || 16}px;
	height: 100%;
	display: flex;
	align-items: center;
	justify-content: center;
	gap: 1px;
	background: #e4e4e4;
	border: 1px solid #999;
	font-weight: 700;
	line-height: 10px;
`
const MiniBoxed = styled.div`
	width: 22px;
	height: 22px;
	display: flex;
	align-items: center;
	justify-content: center;
	background: #fff;
	border: 1px solid #4a6ad2;
`
const PanelFill = styled.div`
	flex: 1;
	min-height: 0;
	overflow: hidden;
	background: #efefef;
`
const LightBand = styled.div`
	flex: none;
	height: ${p => p.$h}px;
	background: #ededed;
`
const PlainRow = styled.div`
	height: 19px;
	border-bottom: 1px solid #fff;
	background: #f0f0f0;
`
const DarkRule = styled.div`
	flex: none;
	height: ${p => p.$h || 3}px;
	background: ${p => p.$c || '#1d2336'};
`
const FilterRow = styled.div`
	flex: none;
	height: 20px;
	display: flex;
	align-items: stretch;
	background: #efefef;
	border-bottom: 1px solid #ccc;
`
const FilterCell = styled.div`
	flex: none;
	width: ${p => p.$w}px;
	display: flex;
	align-items: center;
	justify-content: space-between;
	padding-left: ${p => p.$pl || 1}px;
`
const FilterStar = styled.span`
	margin: 0 auto 0 4px;
`
const FilterBtn = styled.div`
	flex: none;
	width: 17px;
	height: 18px;
	display: flex;
	align-items: center;
	justify-content: center;
	background: #d8d8d8;
	border: 1px solid #777;
`
const LibName = styled.div`
	flex: none;
	width: 199px;
	padding-left: 3px;
	display: flex;
`

/* ---------- data ---------- */

const projectTree = [
	[0, 'EPOS模板', 'page', 'open', 'group'],
	[1, '添加新设备', 'add'],
	[1, '设备和网络', 'network'],
	[1, 'PLC_1 [CPU 1214C DC/DQ/DC]', 'plc', 'closed', 'group'],
	[1, 'HMI_1 [TP700 Comfort]', 'hmi', 'open', 'group'],
	[2, '设备组态', 'config'],
	[2, '在线和诊断', 'steth'],
	[2, '运行系统设置', 'wrench'],
	[2, '画面', 'screens', 'open'],
	[3, '添加新画面', 'add'],
	[3, '根画面', 'screenOn', null, 'sel'],
	[3, '画面_1', 'screen'],
	[2, '画面管理', 'manage', 'closed'],
	[2, 'HMI 变量', 'tagFolder', 'open'],
	[3, '显示所有变量', 'allTags'],
	[3, '添加新变量表', 'add'],
	[3, '默认变量表 [5]', 'tagTable'],
	[2, '连接', 'link'],
	[2, 'HMI 报警', 'mail'],
	[2, '配方', 'recipe'],
	[2, '记录', 'log'],
	[2, '脚本', 'script', 'closed'],
	[2, '计划任务', 'task'],
	[2, '周期', 'cycle'],
	[2, '报表', 'report', 'closed'],
	[2, '文本和图形列表', 'texts'],
	[2, '用户管理', 'users'],
	[1, '未分组的设备', 'ungrouped', 'closed', 'group', true],
	[1, '安全设置', 'security', 'closed', 'group'],
	[1, '跨设备功能', 'cross', 'closed', 'group'],
	[1, '公共数据', 'shared', 'closed', 'group'],
	[1, '文档设置', 'docs', 'closed', 'group'],
]

const libraryTree = [
	[0, '项目库', 'book', 'open', 'sel', null, ''],
	[1, '类型', 'types', 'open', null, true, ''],
	[2, '添加新类型', 'add', null, null, null, ''],
	[2, '111报文面板数据', 'block', 'closed', null, true, 'V 0.0.3'],
	[2, 'EPOS调试面板', 'faceplate', 'closed', null, true, 'V 0.0.2'],
	[1, '模板副本', 'copies', 'closed', null, null, ''],
]

const Up = () => (
	<Chevron viewBox="0 0 10 6">
		<path d="M1 5l4-4 4 4" />
	</Chevron>
)
const Down = () => (
	<Chevron viewBox="0 0 10 6">
		<path d="M1 1l4 4 4-4" />
	</Chevron>
)
const Drop = ({ on }) => (
	<DropMark viewBox="0 0 7 10" $on={on}>
		<path d="M2 0h3v3h2L3.500 7 0 3h2zM0 8h7v2H0z" />
	</DropMark>
)
const TreeHead = ({ node }) => {
	const [, text, icon, state] = node
	return (
		<>
			<CaretBox>{state && <Caret $open={state === 'open'} />}</CaretBox>
			<Icon name={icon} />
			<Label>{text}</Label>
		</>
	)
}
const Pair = ({ icon, on }) => (
	<ToolPair>
		<Icon name={icon} />
		<Drop on={on} />
	</ToolPair>
)

const App = () => (
	<Page>
		<GlobalStyle />
		<TopBar>
			<TopTool><Icon name="newProject" /></TopTool>
			<TopTool $ml={6}><Icon name="save" dim /></TopTool>
			<TopText>保存项目</TopText>
			<TopSep />
			<TopTool $ml={1}><Icon name="print" /></TopTool>
			<TopSep />
			<TopTool><Icon name="cut" /></TopTool>
			<TopTool $ml={7}><Icon name="sheet" /></TopTool>
			<TopTool $ml={8}><Icon name="sheet" /></TopTool>
			<TopTool $ml={9}><Icon name="del" /></TopTool>
			<TopSep />
			<TopTool><Icon name="undo" size={14} /></TopTool>
			<TopTool $ml={4}><Drop /></TopTool>
			<TopTool $ml={8}><Icon name="redo" size={14} /></TopTool>
			<TopTool $ml={4}><Drop /></TopTool>
			<TopSep />
			<TopTool $ml={2}><Icon name="machine" /></TopTool>
			<TopTool $ml={6}><Icon name="download" /></TopTool>
			<TopTool $ml={6}><Icon name="upload" /></TopTool>
			<TopTool $ml={6}><Icon name="device" /></TopTool>
			<TopTool $ml={6}><Icon name="rt" /></TopTool>
			<TopSep $ml={5} $mr={8} />
			<TopTool><Icon name="plug" /></TopTool>
			<TopText $ml={15}>转至在线</TopText>
			<TopTool $ml={8}><Icon name="plug" /></TopTool>
			<TopText>转至离线</TopText>
			<TopSep $ml={8} />
			<TopTool><Icon name="access" /></TopTool>
			<TopTool $ml={4}><Icon name="win" /></TopTool>
			<TopTool $ml={8}><Icon name="winSplit" /></TopTool>
			<TopSep $mr={2} />
			<TopTool><Icon name="del" size={14} /></TopTool>
			<TopSep $mr={10} />
			<TopTool><Icon name="winRows" /></TopTool>
			<TopTool $ml={8}><Icon name="winCols" /></TopTool>
			<TopSep $ml={6} $mr={6} />
			<TopTool><Icon name="check" /></TopTool>
			<TopTool $ml={8}><Icon name="checkX" /></TopTool>
			<SearchBox>&lt;在项目中搜索&gt;</SearchBox>
			<TopTool $ml={9}><Icon name="binoculars" /></TopTool>
		</TopBar>

		<Columns>
			{/* project tree */}
			<Pane $w={412}>
				<TitleBar>
					<span>项目树</span>
					<TitleTools $gap={9} $pr={8}>
						<WinGlyph viewBox="0 0 11 12"><path d="M.5 1.500h10v9H.5zM4 2v8M7 2v8" fill="none" /></WinGlyph>
						<WinGlyph viewBox="0 0 11 12"><path d="M8 0v12L1 6z" /></WinGlyph>
					</TitleTools>
				</TitleBar>
				<WhiteEdge />
				<Tabs $pl={2}>
					<Tab $on $w={63}>设备</Tab>
				</Tabs>
				<ToolStrip $h={27} $bg="#ececec">
					<Icon name="filterGrid" />
					<TitleTools $gap={5} $pr={10}>
						<DotSep />
						<MiniBoxed><Icon name="gridView" /></MiniBoxed>
						<Icon name="gridGo" />
					</TitleTools>
				</ToolStrip>
				<GreyStrip $h={21} $bg="#bebebe" $flat />
				<TreeWrap>
					<TreeList>
						{projectTree.map(node => (
							<Row key={node[1] + node[0]} $tone={node[4]}>
								<NameCell $level={node[0]} $bold={node[5]}>
									<TreeHead node={node} />
								</NameCell>
								<SideCell $w={19} $line="#c4c4c4" />
							</Row>
						))}
					</TreeList>
					<ScrollY $mr={1}>
						<ScrollBtn><Up /></ScrollBtn>
						<Thumb $h={261}><Grip /></Thumb>
						<Track />
						<ScrollBtn><Down /></ScrollBtn>
					</ScrollY>
				</TreeWrap>
				<DarkRule $h={2} />
				<SectionHead>
					<SectionToggle><Down /></SectionToggle>
					<SectionName>详细视图</SectionName>
				</SectionHead>
				<GreyStrip $h={25} />
				<LightBand $h={27} />
				<HeadRow>
					<HeadCell $w={15} />
					<HeadCell $w={160}>名称</HeadCell>
					<HeadCell />
				</HeadRow>
				<PanelFill>
					<PlainRow />
					<PlainRow />
					<PlainRow />
				</PanelFill>
			</Pane>
			<Divider />

			{/* screen editor */}
			<Pane $w={922}>
				<TitleBar $gap={9} $pl={5}>
					<Crumb>EPOS模板</Crumb>
					<CrumbArrow />
					<Crumb>HMI_1 [TP700 Comfort]</Crumb>
					<CrumbArrow />
					<Crumb $fs={15}>画面</Crumb>
					<CrumbArrow />
					<Crumb $fs={15}>根画面</Crumb>
					<TitleTools $pr={6}>
						<WinGlyph viewBox="0 0 11 12"><rect x="0" y="9" width="11" height="2" /></WinGlyph>
						<WinGlyph viewBox="0 0 11 12"><path d="M3.500 .5h7v7M0 3h8v8H0z" /></WinGlyph>
						<WinGlyph viewBox="0 0 11 12"><rect x="0" y="1" width="11" height="10" /></WinGlyph>
						<WinGlyph viewBox="0 0 11 12"><path d="M.5 .5l10 11M10.500 .5L.5 11.500" strokeWidth="2" /></WinGlyph>
					</TitleTools>
				</TitleBar>
				<WhiteEdge />
				<GreyStrip $h={25} />
				<ToolStrip $h={27} $pl={5} $bg="#e8e8e8">
					<ComboWrap $w={112}>
						<ComboValue />
						<ComboBtn><Icon name="listBtn" size={11} /></ComboBtn>
					</ComboWrap>
					<ComboWrap $w={37}>
						<ComboValue />
						<ComboBtn><DownTri /></ComboBtn>
					</ComboWrap>
					<TextTool $b $ml={2}>B</TextTool>
					<TextTool $i>I</TextTool>
					<TextTool $deco="underline">U</TextTool>
					<TextTool $deco="line-through">S</TextTool>
					<ToolPair $ml={-3}><TextTool>A</TextTool><Drop /></ToolPair>
					<Pair icon="align" />
					<DotSep $m={-2} />
					<Pair icon="fontColor" />
					<Pair icon="fill" />
					<Pair icon="pen" />
					<DotSep $m={-2} />
					<Pair icon="lineWeights" />
					<Pair icon="lineStyle" />
					<DotSep $m={-2} />
					<Pair icon="green" on />
					<Pair icon="rotate" />
					<Pair icon="alignMid" on />
					<Pair icon="distribute" />
					<Pair icon="sameSize" />
					<DotSep $m={-2} />
					<Icon name="brush" />
					<Pair icon="layers" on />
					<Icon name="zoomBox" />
				</ToolStrip>
				<CanvasRow>
					<GreySide />
					<BlueSide />
					<BlackStage>
						<Screen>
							<ScreenHead>
								<Brand>
									<BrandName>SIEMENS</BrandName>
									<BrandSub>SIMATIC HMI</BrandSub>
								</Brand>
								<ScreenTitle>
									<span>根画面</span>
									<TriOutline viewBox="0 0 18 10" $w={18} $h={10}><path d="M1 .75h16L9 9.500z" /></TriOutline>
								</ScreenTitle>
								<Clock>
									<ClockDate>2000/1</ClockDate>
									<ClockTime>10:5</ClockTime>
								</Clock>
							</ScreenHead>
							<ScreenBody>
								<FieldLabel $x={75} $y={78}>当前位置:</FieldLabel>
								<FieldLabel $x={75} $y={108}>MDI位置:</FieldLabel>
								<FieldLabel $x={75} $y={138}>MDI速度:</FieldLabel>
								<ValueBox $x={161} $y={77} $w={105} $h={20} $plain>+00000000LU</ValueBox>
								<ValueBox $x={161} $y={107} $w={110} $h={23}>+00000000LU</ValueBox>
								<ValueBox $x={161} $y={137} $w={154} $h={23}>00000*1000LU/min</ValueBox>
								<HmiButton $x={326} $y={77} $edge="#00e800" $ls={1} $lift={2}>执行定位</HmiButton>
								<HmiSelect $x={326} $y={127}>
									<span>断使能</span>
									<TriOutline viewBox="0 0 18 10" $w={16} $h={10}><path d="M1 .75h16L9 9.500z" /></TriOutline>
								</HmiSelect>
								<HmiButton $x={76} $y={174} $edge="#00e800">Jog1</HmiButton>
								<HmiButton $x={203} $y={174} $edge="#00e800">Jog2</HmiButton>
								<HmiButton $x={327} $y={174} $edge="#00e800" $lift={3}>点动/寸动</HmiButton>
								<HmiButton $x={539} $y={174} $edge="#f00000" $ls={1} $lift={3}>故障复位</HmiButton>
								<Lamp $x={534} $y={75} />
								<Lamp $x={534} $y={105} />
								<Lamp $x={534} $y={135} />
								<LampLabel $x={565} $y={77}>绝对定位允许</LampLabel>
								<LampLabel $x={565} $y={107}>使能状态</LampLabel>
								<LampLabel $x={565} $y={137}>故障指示</LampLabel>
								<Handle $x={75} $y={77} />
								<Handle $x={367} $y={77} />
								<Handle $x={658} $y={77} />
								<Handle $x={75} $y={139} />
								<Handle $x={658} $y={139} />
								<Handle $x={75} $y={202} />
								<Handle $x={367} $y={202} />
								<Handle $x={658} $y={202} />
							</ScreenBody>
							<FooterBar>
								<FooterCell $pl={20}>
									<HomeIcon viewBox="0 0 40 41">
										<path d="M20 0l20 21H0z" />
										<path d="M4 22h32v19H25V30h-9v11H4z" />
									</HomeIcon>
								</FooterCell>
								{Array.from({ length: 8 }, (_, i) => <FooterCell key={i} />)}
								<FooterCell $pl={19}><InfoTile>(i</InfoTile></FooterCell>
							</FooterBar>
							<Watermark $x={138} $y={363} $size={41} $ls={1}>西门子工业 技术论坛</Watermark>
							<Watermark $x={156} $y={406} $size={26} $ls={.5} $latin>support.industry.siemens.com/cs</Watermark>
						</Screen>
					</BlackStage>
					<ScrollY>
						<ScrollBtn><Up /></ScrollBtn>
						<Thumb $h={409}><Grip /></Thumb>
						<Track />
						<ScrollBtn><Down /></ScrollBtn>
					</ScrollY>
				</CanvasRow>
				<StatusRow>
					<HTrack>
						<HBtn><CaretLeft /></HBtn>
						<HThumb><HGrip /></HThumb>
					</HTrack>
					<HBtn>›</HBtn>
					<ComboWrap $w={156} $h={16} $bg="#fff" $ml={7}>
						<ComboValue>100%</ComboValue>
						<ComboBtn><DownTri $c="#111" /></ComboBtn>
					</ComboWrap>
					<Slider viewBox="0 0 68 16">
						<path d="M0 5h68" stroke="#666" />
						<path d="M0 12v3M4 12v3M8 12v3M12 12v3M16 12v3M20 12v3M24 12v3M28 12v3M32 12v3M36 12v3M40 12v3M44 12v3M48 12v3M52 12v3M56 12v3M60 12v3M64 12v3M68 12v3" stroke="#555" />
						<path d="M19 1h7v6l-3.500 4L19 7z" fill="#ddd" stroke="#777" />
					</Slider>
					<TitleTools $pr={4}><Icon name="fit" size={13} /></TitleTools>
				</StatusRow>
				<DarkRule />
				<TitleBar $h={24} $pl={4}>
					<Crumb $ls={.3}>EPOS 调试面板_1 [面板实例] [EPOS 调试面板 V 0.0.2]</Crumb>
					<StateTabs>
						<StateTab $w={76} $on><Icon name="inspect" size={14} />属性</StateTab>
						<StateTab $w={81}>
							<Icon name="info" size={14} />信息
							<Icon name="warn" size={14} />
						</StateTab>
						<StateTab $w={76}><Icon name="steth" size={14} />诊断</StateTab>
					</StateTabs>
					<TitleTools $gap={7} $pr={6} $ml={21}>
						<WinGlyph viewBox="0 0 11 12"><path d="M3.500 .5h7v7M0 3h8v8H0z" /></WinGlyph>
						<WinGlyph viewBox="0 0 11 12" $dim><path d="M.5 1.500h10v9H.5zM1 4.500h9M1 7.500h9" fill="none" /></WinGlyph>
						<WinGlyph viewBox="0 0 11 12"><path d="M0 3h11L5.500 10z" /></WinGlyph>
					</TitleTools>
				</TitleBar>
				<WhiteEdge />
				<Tabs $pl={5}>
					<Tab>属性</Tab>
					<Tab $on>接口</Tab>
					<Tab>动画</Tab>
					<Tab>事件</Tab>
					<Tab>文本</Tab>
				</Tabs>
				<ToolStrip $h={33} $pl={10} $gap={8} $bg="#e8e8e8">
					<Icon name="sortAZ" />
					<Icon name="groupBox" />
					<Icon name="levels" />
				</ToolStrip>
				<HeadRow $h={19}>
					<HeadCell $w={24} />
					<HeadCell $w={180}>名称</HeadCell>
					<HeadCell $w={25} />
					<HeadCell $w={26} />
					<HeadCell $w={120} $light>静态值</HeadCell>
					<HeadCell $w={369}>动态化</HeadCell>
					<HeadCell />
				</HeadRow>
				<PanelFill>
					<GridRow>
						<Cell $bg="#c8c8c8" />
						<Cell $span={3} $bg="#d8d8d8" $c="#1010e0" $line="#d8d8d8" $pl={4}>
							<CaretBox><Caret $open /></CaretBox>
							<Label>Category_1</Label>
						</Cell>
						<Cell $span={2} $bg="#d8d8d8" $line="#b8b8b8" />
						<Cell />
					</GridRow>
					<GridRow>
						<Cell $bg="#b8c6d4" />
						<Cell $bg="#e0e0e0" $c="#1010e0" $pl={40}>Property_1</Cell>
						<Cell />
						<Cell />
						<Cell $bg="#dedede" $line="#b8b8b8" />
						<Cell>
							<InputCell>EPOS1</InputCell>
							<MiniBtn $w={16}><Icon name="listBtn" size={13} /></MiniBtn>
							<MiniBtn $w={17}>...</MiniBtn>
							<MiniBtn $w={27}><Icon name="tagBtn" size={14} /><DownTri $c="#111" /></MiniBtn>
						</Cell>
						<Cell />
					</GridRow>
					{[0, 1, 2, 3].map(i => (
						<GridRow key={i}>
							<Cell $bg="#c8c8c8" />
							<Cell />
							<Cell />
							<Cell />
							<Cell $line="#b8b8b8" />
							<Cell />
							<Cell />
						</GridRow>
					))}
				</PanelFill>
			</Pane>
			<Divider />

			{/* library */}
			<Pane $w={380}>
				<TitleBar $pl={5}><span>库</span></TitleBar>
				<WhiteEdge />
				<SectionHead $h={24}><SectionName $pt={3}>选项</SectionName></SectionHead>
				<ToolStrip $h={27} $pl={5} $bg="#ececec">
					<Icon name="library" />
					<Icon name="lib2" />
					<Icon name="lib3" />
				</ToolStrip>
				<DarkRule $c="#8a8a8a" />
				<SectionHead $h={21}>
					<SectionToggle $w={20}><Down /></SectionToggle>
					<SectionName $pt={2}>项目库</SectionName>
				</SectionHead>
				<ToolStrip $h={26} $pl={6} $gap={6} $bg="#e8e8e8">
					<Icon name="filterGrid" />
					<DotSep />
					<Icon name="listView" />
					<ComboWrap $w={136} $h={18} $bg="#fff" $ml={3}>
						<ComboValue>全部</ComboValue>
						<ComboBtn><DownTri $c="#111" /></ComboBtn>
					</ComboWrap>
					<Icon name="moveIn" />
					<Icon name="moveOut" />
				</ToolStrip>
				<HeadRow $h={18}>
					<HeadCell $w={199}>名称</HeadCell>
					<HeadCell $w={40}>状态</HeadCell>
					<HeadCell>版本</HeadCell>
				</HeadRow>
				<FilterRow>
					<FilterCell $w={199}>
						<Icon name="funnel" />
						<FilterStar>*</FilterStar>
						<FilterBtn><DownTri $c="#13138c" /></FilterBtn>
					</FilterCell>
					<FilterCell $w={40} $pl={7}>
						<span>*</span>
						<FilterBtn><DownTri $c="#111" /></FilterBtn>
					</FilterCell>
				</FilterRow>
				<PanelFill>
					{libraryTree.map(node => (
						<Row key={node[1]} $tone={node[4]}>
							<LibName>
								<NameCell $level={node[0]}>
									<TreeHead node={node} />
								</NameCell>
							</LibName>
							<SideCell $w={40} $center>{node[5] && <Status />}</SideCell>
							<SideCell $w={141}>{node[6]}</SideCell>
						</Row>
					))}
					{Array.from({ length: 30 }, (_, i) => (
						<Row key={i}>
							<LibName />
							<SideCell $w={40} />
							<SideCell $w={141} />
						</Row>
					))}
				</PanelFill>
			</Pane>
		</Columns>
	</Page>
)

export default App
